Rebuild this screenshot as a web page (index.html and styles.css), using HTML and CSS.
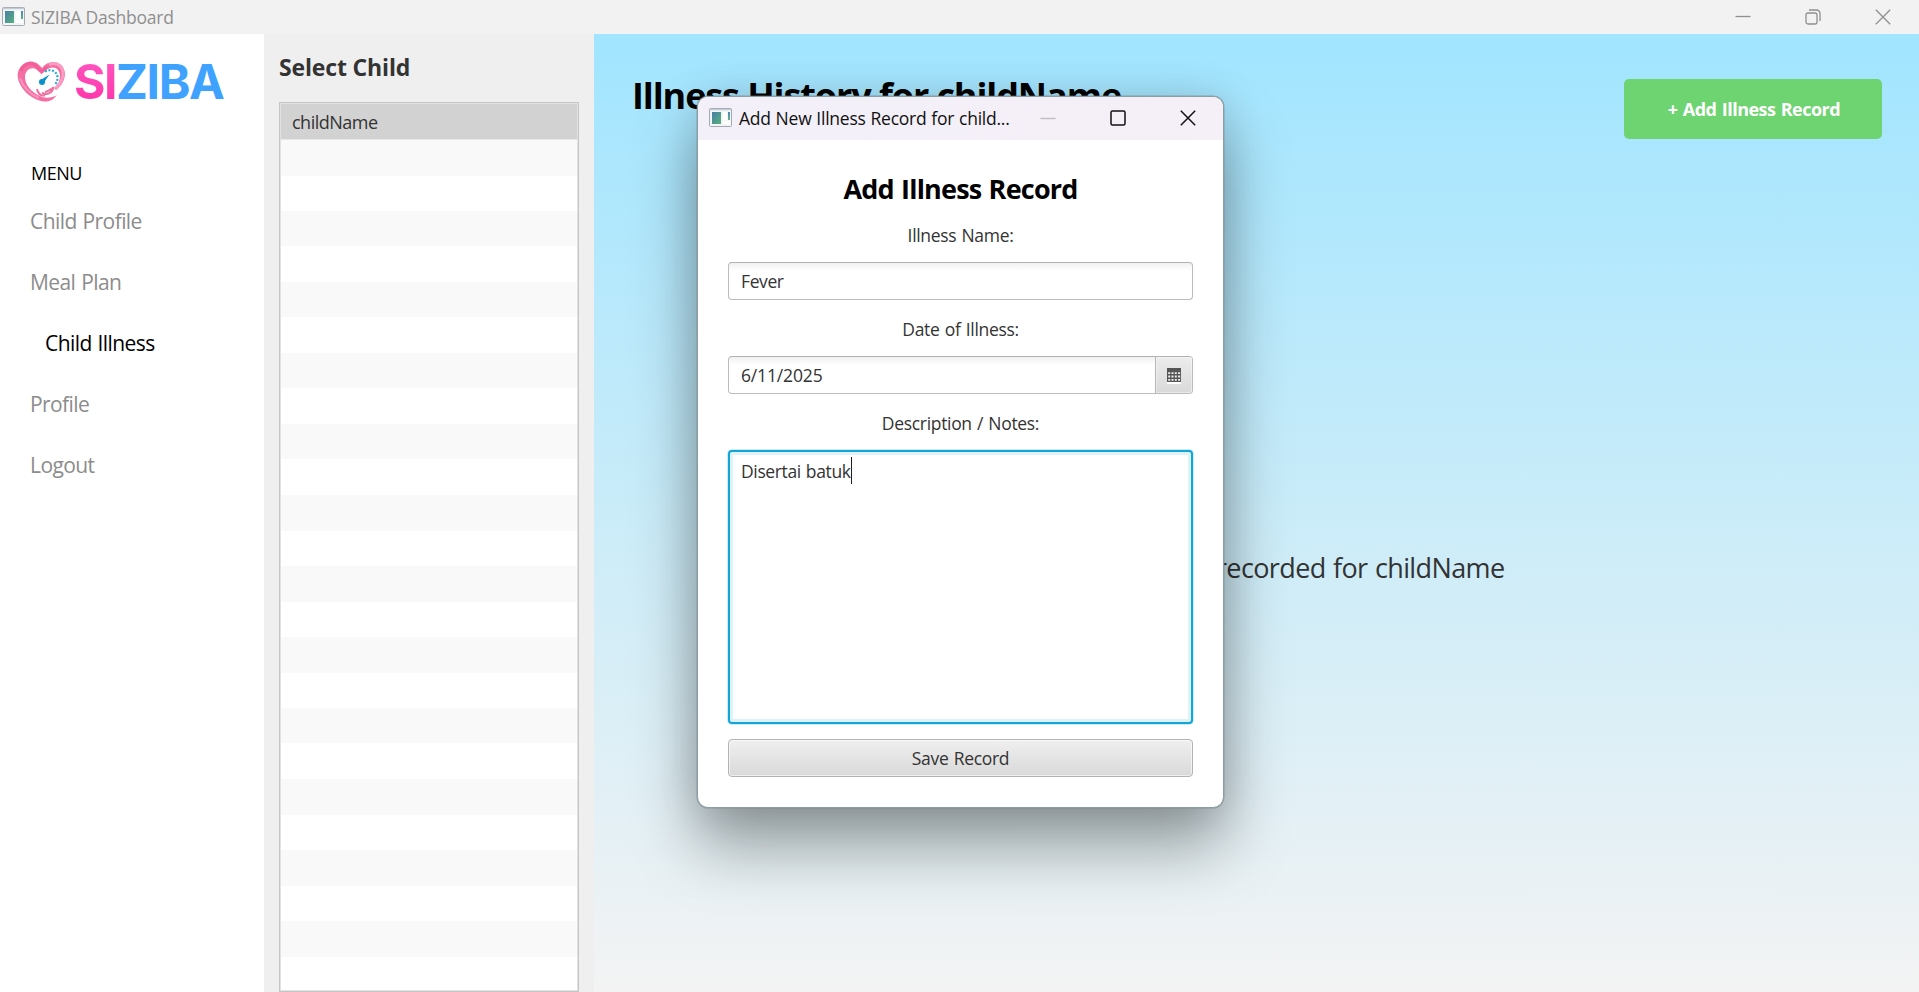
FILE: index.html
```html
<!DOCTYPE html>
<html lang="en">
<head>
<meta charset="utf-8">
<title>SIZIBA Dashboard</title>
<link rel="stylesheet" href="styles.css">
</head>
<body>
<svg class="defs" width="0" height="0" aria-hidden="true">
  <defs>
    <linearGradient id="pane" x1="0" y1="0" x2="1" y2="1"><stop offset="0" stop-color="#4a7fa8"/><stop offset="1" stop-color="#55b07c"/></linearGradient>
    <linearGradient id="pane2" x1="0" y1="0" x2="0" y2="1"><stop offset="0" stop-color="#4d86b5"/><stop offset="1" stop-color="#5fb08c"/></linearGradient>
    <symbol id="app" viewBox="0 0 23 19">
      <rect x=".5" y=".5" width="22" height="18" rx="1" fill="#f4f5f7" stroke="#a3a9b0"/>
      <path d="M1 1.5h21" stroke="#c3c9d6" stroke-width="1.4"/>
      <rect x="3" y="4" width="9" height="12" fill="url(#pane)"/>
      <rect x="14" y="4" width="4" height="8" fill="#fff"/>
      <rect x="19" y="4" width="2" height="8" fill="url(#pane2)"/>
      <rect x="14" y="13" width="7" height="3" fill="#fff"/>
    </symbol>
  </defs>
</svg>
<header class="titlebar">
  <svg class="app-icon"><use href="#app"/></svg>
  <span class="titlebar-text">SIZIBA Dashboard</span>
  <div class="controls">
    <svg width="16" height="16" viewBox="0 0 16 16"><path d="M.5 7.500h15"/></svg>
    <svg width="16" height="16" viewBox="0 0 16 16"><rect x="1" y="4" width="11" height="11" rx="2"/><path d="M4 1h7.500a3.500 3.500 0 0 1 3.500 3.500V12"/></svg>
    <svg width="16" height="16" viewBox="0 0 16 16"><path d="M.8.8l14.400 14.400M15.200.8L.8 15.200"/></svg>
  </div>
</header>
<div class="layout">
  <nav class="sidebar">
    <div class="logo">
      <svg class="heart" width="50" height="42" viewBox="0 0 50 42">
        <path fill-rule="evenodd" d="M25 7C20 0 13 -1 8 2C1 6 -1 14 2 21C6 31 16 39 27 40.500C33 41 37 38 40 34C35 37 29 37.500 24 35.500C14 31 8 24 8 16C8 8 16 5 20 9L24.500 13L30 8.500C36 4 43 7 43 15C43 20 41 24 37 27L39 29C46 24 49 16 47.500 10C45 -1 31 -2 25 7Z" fill="#f56fa3"/>
        <path d="M4 10C6 3 13 1 18 4C21 6 22 8 24.500 11L30 6" fill="none" stroke="#f03f86" stroke-opacity=".35" stroke-width="3"/>
        <path d="M32 3.500C41 0 48 7 45.500 16C44.500 21 42 25 38.500 27.500" fill="none" stroke="#fa9cc4" stroke-width="3"/>
        <path d="M3 17C6 26 13 33 22 37" fill="none" stroke="#fa95bf" stroke-width="2"/>
        <path d="M20 28C21 33 24 35 28 34.500M25 31.500C30 35 36 31 36 27C33 28.500 32 30 28 31" fill="none" stroke="#f0709f" stroke-width="2"/>
        <path d="M28 10.500C33 7.500 40 10 40.500 16C40.500 19 40 21 38.500 23" fill="none" stroke="#2aa9d6" stroke-width="2.200" stroke-dasharray="2 1.600"/>
        <path d="M32.500 13.500L26.500 22L23.500 19Z" fill="#0b92cb"/><circle cx="25" cy="21" r="3" fill="#0b92cb"/>
      </svg>
      <span class="wordmark"><b class="pink">SI</b><b class="blue">ZIBA</b></span>
    </div>
    <div class="menu-label">MENU</div>
    <a class="item first">Child Profile</a>
    <a class="item">Meal Plan</a>
    <a class="item active">Child Illness</a>
    <a class="item">Profile</a>
    <a class="item">Logout</a>
  </nav>
  <section class="picker">
    <h2 class="picker-title">Select Child</h2>
    <div class="list"><div class="row">childName</div><div class="rows"></div></div>
  </section>
  <main class="content">
    <div class="head">
      <h1 class="heading">Illness History for childName</h1>
      <button class="add">+ Add Illness Record</button>
    </div>
    <p class="empty">No illness history recorded for childName</p>
  </main>
</div>
<div class="dialog">
  <div class="dialog-bar">
    <svg class="app-icon"><use href="#app"/></svg>
    <span class="dialog-title">Add New Illness Record for child...</span>
    <div class="dialog-controls">
      <svg class="dim" width="16" height="16" viewBox="0 0 16 16"><path d="M.5 8.500h15"/></svg>
      <svg width="16" height="16" viewBox="0 0 16 16"><rect x="1" y="1" width="14" height="14" rx="1.500"/></svg>
      <svg width="16" height="16" viewBox="0 0 16 16"><path d="M.8.8l14.400 14.400M15.200.8L.8 15.200"/></svg>
    </div>
  </div>
  <div class="form">
    <h2 class="form-title">Add Illness Record</h2>
    <div class="label">Illness Name:</div>
    <div class="field">Fever</div>
    <div class="label">Date of Illness:</div>
    <div class="field date"><span class="date-text">6/11/2025</span>
      <span class="cal"><svg width="14" height="16" viewBox="0 0 14 16"><rect width="14" height="14" fill="#555"/><path d="M0 15h14" stroke="#fff" stroke-width="2"/><path d="M1.200 5.200h12M1.200 8.500h12M1.200 11.800h12" stroke="#eee" stroke-width="1.800" stroke-dasharray="2 1.300"/></svg></span>
    </div>
    <div class="label">Description / Notes:</div>
    <div class="area"><span class="area-text">Disertai batuk</span><i class="caret"></i></div>
    <button class="save">Save Record</button>
  </div>
</div>
</body>
</html>
```
FILE: styles.css
```css
* { box-sizing: border-box; }
body { margin: 0; width: 1919px; height: 992px; overflow: hidden; position: relative; font-family: "Open Sans", "Noto Sans", sans-serif; font-size: 17px; color: #333; background: #fff; }
h1, h2, p { margin: 0; }
button { font-family: inherit; }
span, h1, h2, a, p, .label { white-space: nowrap; }
.defs { position: absolute; }
.titlebar { height: 34px; background: #f2f2f2; display: flex; align-items: center; padding: 0 28px 1px 2px; color: #8f8f8f; }
.app-icon { width: 23px; height: 19px; flex: none; }
.titlebar-text { margin-left: 6px; font-size: 17.500px; letter-spacing: -0.250px; }
.controls { margin-left: auto; display: flex; gap: 54px; }
.controls svg { fill: none; stroke: #8f8f8f; stroke-width: 1.300; }
.layout { display: flex; height: 958px; }
.sidebar { width: 264px; flex: none; background: #fff; display: flex; flex-direction: column; align-items: flex-start; }
.logo { display: flex; align-items: center; height: 48px; margin: 24px 0 0 17px; }
.wordmark { font-family: Inter, "Liberation Sans", sans-serif; font-size: 48px; line-height: 48px; letter-spacing: -1.400px; margin-left: 7px; }
.wordmark b { font-weight: 700; }
.pink { background: linear-gradient(#ff5cc4, #ff2fa6); -webkit-background-clip: text; background-clip: text; color: transparent; }
.blue { color: #3fa2ff; }
.menu-label { margin: 55px 0 0 31px; height: 24px; line-height: 24px; font-size: 18px; letter-spacing: -0.500px; color: #000; }
.item { margin-left: 30px; height: 61px; line-height: 61px; font-size: 21px; color: #8c8c8c; letter-spacing: -0.580px; word-spacing: 1px; }
.first { margin-top: 6px; }
.active { color: #000; margin-left: 45px; }
.picker { width: 330px; flex: none; background: #efefef; padding: 17px 15px 0; display: flex; flex-direction: column; }
.picker-title { font-size: 23px; line-height: 32px; letter-spacing: -0.150px; height: 51px; }
.list { flex: 1; border: 1px solid #c5c5c5; box-shadow: inset 0 0 0 1px #e2e2e2; padding: 1px; display: flex; flex-direction: column; }
.row { height: 36px; line-height: 36px; padding-left: 11px; background: #d2d2d2; border-bottom: 1px solid #e9e9e9; font-size: 18px; letter-spacing: -0.500px; }
.rows { flex: 1; background: repeating-linear-gradient(#f9f9f9 0 35.500px, #fff 35.500px 71px); }
.content { flex: 1; background: linear-gradient(#a1e5ff, #f3f3f3); padding: 45px 37px 0 38px; display: flex; flex-direction: column; }
.head { display: flex; justify-content: space-between; align-items: flex-start; }
.heading { font-size: 36px; line-height: 34px; color: #000; letter-spacing: -1.100px; }
.add { width: 258px; height: 60px; border: 0; border-radius: 5px; background: #6ed371; color: #fff; font-weight: 700; font-size: 18px; letter-spacing: -0.500px; word-spacing: 1px; padding-left: 8px; }
.empty { align-self: center; margin: 411px 7px 0 0; line-height: 36px; font-size: 27px; letter-spacing: -0.620px; word-spacing: 1px; }
.dialog { position: absolute; left: 697px; top: 96px; width: 527px; height: 712px; border: 1px solid #8b9ea4; border-radius: 11px; background: #fff; box-shadow: 0 0 0 .5px rgba(120, 135, 140, .6), 0 38px 64px rgba(0, 0, 0, .36), 0 0 40px rgba(0, 0, 0, .13); }
.dialog-bar { height: 43px; display: flex; align-items: center; padding: 0 27px 2px 11px; background: linear-gradient(90deg, #f3f0f9, #f5eff7); border-radius: 10px 10px 0 0; color: #111; }
.dialog-title { margin-left: 7px; font-size: 17.500px; letter-spacing: -0.230px; word-spacing: .5px; }
.dialog-controls { margin-left: auto; display: flex; gap: 54px; }
.dialog-controls svg { fill: none; stroke: #111; stroke-width: 1.500; }
.dialog-controls .dim { stroke: #c2c0c8; }
.form { padding: 30px; display: flex; flex-direction: column; }
.form-title { text-align: center; font-size: 27px; line-height: 38px; letter-spacing: -0.800px; word-spacing: 1px; color: #000; }
.label { text-align: center; height: 24px; line-height: 24px; margin: 15px 0; font-size: 17.500px; letter-spacing: -0.320px; word-spacing: 1px; }
.field { height: 38px; border: 1px solid #bcbcbc; border-top-color: #b2b2b2; border-radius: 4px; padding-left: 12px; line-height: 37px; font-size: 17.500px; letter-spacing: -0.400px; background: linear-gradient(#f1f1f1, #fff 8px); display: flex; }
.date-text { letter-spacing: -0.150px; }
.label + .field { margin-bottom: 2px; }
.cal { margin-left: auto; width: 37px; border-left: 1px solid #b5b5b5; background: linear-gradient(#ececec, #d9d9d9); display: flex; align-items: center; justify-content: center; border-radius: 0 3px 3px 0; box-shadow: inset 0 0 0 1px rgba(255, 255, 255, .4); padding-top: 2px; }
.area { height: 274px; border: 2px solid #12a5d5; border-radius: 4px; padding: 5px 0 0 11px; background: #fff; box-shadow: 0 0 0 1px #c9edf7, inset 0 0 0 3px #def3f9; display: flex; line-height: 28px; font-size: 17.500px; letter-spacing: -0.370px; word-spacing: .8px; }
.caret { width: 1.500px; height: 27px; background: #222; }
.save { margin-top: 15px; height: 38px; border: 1px solid #b2b2b2; border-radius: 4px; background: linear-gradient(#efefef, #d9d9d9); box-shadow: inset 0 0 0 1px rgba(255, 255, 255, .6); color: #333; font-size: 17.500px; letter-spacing: -0.300px; word-spacing: 1px; }
```
